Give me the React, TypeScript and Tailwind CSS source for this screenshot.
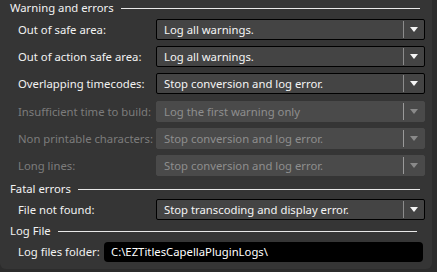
import React from 'react';

const font = { fontFamily: '"Segoe UI", "Noto Sans", "Open Sans", sans-serif' };

const Header: React.FC<{ title: string; className?: string }> = ({ title, className }) => (
  <div className={`flex items-center h-[15px] pl-[10px] pr-[12px] gap-[7px] ${className ?? ''}`}>
    <span className="text-[11.3px] leading-[15px] text-[#f2f2f2] whitespace-nowrap">{title}</span>
    <div className="flex-1 h-px bg-[#e8e8e8] mt-px" />
  </div>
);

const Arrow: React.FC<{ disabled?: boolean }> = ({ disabled }) => (
  <svg width="8" height="5" viewBox="0 0 8 5">
    <path d="M0 0 H8 L4 5 Z" fill={disabled ? '#8a8a8a' : '#f4f4f4'} />
  </svg>
);

const Combo: React.FC<{ value: string; disabled?: boolean }> = ({ value, disabled }) => (
  <div
    className={`flex items-center w-[269px] h-[21px] rounded-[2px] ${
      disabled ? 'bg-[#4a4a4a] border border-[#4a4a4a] text-[#8e8e8e]' : 'bg-[#444444] border border-black text-[#f4f4f4]'
    }`}
  >
    <span className="flex-1 pl-[7px] text-[11.3px] leading-none whitespace-nowrap">{value}</span>
    <div className={`w-px h-[17px] ${disabled ? 'bg-[#9a9a9a]' : 'bg-[#8c8c8c]'}`} />
    <div className="w-[20px] flex items-center justify-center">
      <Arrow disabled={disabled} />
    </div>
  </div>
);

const Row: React.FC<{ label: string; value: string; disabled?: boolean }> = ({ label, value, disabled }) => (
  <div className="flex items-center pl-[18px]">
    <span className={`w-[138px] text-[11.3px] leading-none whitespace-nowrap ${disabled ? 'text-[#7c7c7c]' : 'text-[#f2f2f2]'}`}>
      {label}
    </span>
    <Combo value={value} disabled={disabled} />
  </div>
);

const App: React.FC = () => {
  return (
    <div className="w-[437px] h-[272px] bg-[#2c2c2c] overflow-hidden" style={font}>
      <div className="w-[432px] h-[269px] bg-[#353535] rounded-b-[6px] flex flex-col">
        <Header title="Warning and errors" />
        <div className="flex flex-col gap-[6px] mt-[4px]">
          <Row label="Out of safe area:" value="Log all warnings." />
          <Row label="Out of action safe area:" value="Log all warnings." />
          <Row label="Overlapping timecodes:" value="Stop conversion and log error." />
          <div className="h-px -mt-[6px]" />
          <Row label="Insufficient time to build:" value="Log the first warning only" disabled />
          <Row label="Non printable characters:" value="Stop conversion and log error." disabled />
          <Row label="Long lines:" value="Stop conversion and log error." disabled />
        </div>
        <Header title="Fatal errors" className="mt-[5px]" />
        <div className="mt-[3px]">
          <Row label="File not found:" value="Stop transcoding and display error." />
        </div>
        <Header title="Log File" className="mt-[3px] pr-[15px]" />
        <div className="flex items-center pl-[18px] mt-[4px]">
          <span className="w-[86px] text-[11.3px] leading-none text-[#f2f2f2] whitespace-nowrap">Log files folder:</span>
          <div className="w-[319px] h-[20px] bg-black rounded-[4px] flex items-center pl-[7px]">
            <span className="text-[11.3px] leading-none text-white whitespace-nowrap">C:\EZTitlesCapellaPluginLogs\</span>
          </div>
        </div>
      </div>
    </div>
  );
};

export default App;
